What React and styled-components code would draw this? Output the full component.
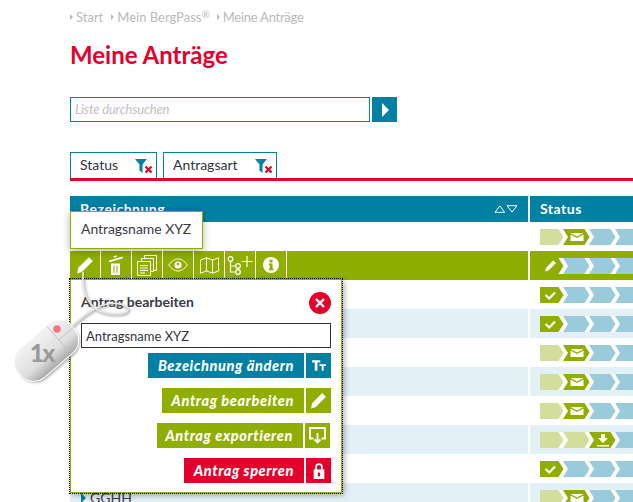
import React from "react";
import styled, { createGlobalStyle } from "styled-components";

const TEAL = "#0080a3";
const GREEN = "#8fae00";
const RED = "#e4002d";
const TINT = "#e3f0f5";
const BLUE = "#9acbda";
const LIGHT = "#d3de9d";

const Global = createGlobalStyle`
  html, body { margin: 0; padding: 0; background: #fff; }
  body { font-family: Lato, "Liberation Sans", sans-serif; color: #3a3a46; }
  * { box-sizing: border-box; }
`;

const Page = styled.div`
  position: relative;
  width: 633px;
  height: 502px;
  overflow: hidden;
  padding: 9px 0 0 70px;
`;
const Crumbs = styled.nav`
  display: flex;
  height: 16px;
  align-items: center;
  font-size: 13px;
  color: #bababa;
`;
const Crumb = styled.span`
  display: flex;
  align-items: center;
  margin-right: ${(p) => p.$gap || 0}px;
  letter-spacing: ${(p) => p.$track || 0}px;
  sup { font-size: 10px; line-height: 1; position: relative; top: -3px; }
  &::before {
    content: "";
    margin-right: 3px;
    border-left: 3px solid #bababa;
    border-top: 3px solid transparent;
    border-bottom: 3px solid transparent;
  }
`;
const Title = styled.h1`
  margin: 16px 0 0;
  height: 28px;
  line-height: 28px;
  font-size: 24px;
  font-weight: 700;
  color: ${RED};
`;
const Search = styled.div`
  display: flex;
  gap: 2px;
  margin-top: 28px;
  width: 327px;
`;
const SearchField = styled.div`
  width: 300px;
  height: 25px;
  border: 1px solid ${TEAL};
  padding-left: 4px;
  font-size: 13px;
  letter-spacing: -0.15px;
  line-height: 22px;
  font-style: italic;
  color: #c0c0c0;
`;
const SearchButton = styled.div`
  width: 25px;
  height: 25px;
  background: ${TEAL};
  display: flex;
  align-items: center;
  justify-content: center;
  &::before {
    content: "";
    margin-left: 1px;
    border-left: 7px solid #fff;
    border-top: 7px solid transparent;
    border-bottom: 7px solid transparent;
  }
`;
const Tabs = styled.div`
  display: flex;
  gap: 6px;
  margin-top: 30px;
  height: 29px;
  border-bottom: 3px solid ${RED};
`;
const Tab = styled.div`
  width: ${(p) => p.$w}px;
  height: 26px;
  border: 1px solid ${TEAL};
  border-bottom: none;
  padding-left: 9px;
  font-size: 14px;
  line-height: 24px;
  color: #33333f;
  position: relative;
`;
const FilterMark = styled.svg`
  position: absolute;
  right: 3px;
  top: 6px;
`;
const Table = styled.div`
  margin-top: 15px;
`;
const Row = styled.div`
  display: grid;
  grid-template-columns: 458px 103px;
  column-gap: 2px;
  height: ${(p) => (p.$head ? 26 : 29)}px;
`;
const HeadCell = styled.div`
  background: ${TEAL};
  color: #fff;
  font-weight: 700;
  font-size: 14px;
  letter-spacing: 0.5px;
  padding: 0 10px 2px;
  display: flex;
  align-items: center;
  justify-content: space-between;
  svg { margin-top: 1px; }
`;
const Cell = styled.div`
  background: ${(p) => (p.$sel ? GREEN : p.$tint ? TINT : "#fff")};
  display: flex;
  align-items: center;
`;
const NameCell = styled(Cell)`
  padding-left: 11px;
  font-size: 14px;
  color: #3a3a46;
  &::before {
    content: "";
    margin-right: 4px;
    border-left: 5px solid ${TEAL};
    border-top: 5px solid transparent;
    border-bottom: 5px solid transparent;
  }
`;
const Tool = styled.div`
  width: 31px;
  height: 28px;
  border-right: 1px solid #fff;
  display: flex;
  align-items: center;
  justify-content: center;
  align-self: flex-start;
`;
const StatusCell = styled(Cell)`
  padding-left: 10px;
  overflow: hidden;
`;
const Tip = styled.div`
  position: absolute;
  left: 70px;
  top: 211px;
  width: 133px;
  height: 38px;
  background: #fff;
  border: 1px solid ${GREEN};
  box-shadow: 0 2px 8px rgba(0, 0, 0, 0.3);
  padding-left: 10px;
  font-size: 14px;
  letter-spacing: -0.05px;
  line-height: 34px;
  color: #3a3a46;
`;
const Popup = styled.div`
  position: absolute;
  left: 70px;
  top: 279px;
  width: 272px;
  height: 214px;
  background: #fff;
  border: 1px solid ${GREEN};
  outline: 1px dotted #000;
  outline-offset: 0;
  box-shadow: 2px 2px 6px rgba(0, 0, 0, 0.35);
  padding: 12px 10px 0;
`;
const PopHead = styled.div`
  display: flex;
  align-items: center;
  justify-content: space-between;
  height: 22px;
  font-size: 14px;
  line-height: 18px;
  font-weight: 700;
  color: #3a3a46;
`;
const PopTitle = styled.span`
  margin-top: -3px;
`;
const Close = styled.div`
  width: 22px;
  height: 22px;
  border-radius: 50%;
  background: ${RED};
  display: flex;
  align-items: center;
  justify-content: center;
`;
const NameInput = styled.div`
  margin-top: 9px;
  height: 25px;
  width: 250px;
  border: 1px solid #333;
  padding-left: 4px;
  font-size: 13px;
  line-height: 24px;
  color: #33333f;
`;
const Actions = styled.div`
  margin-top: 5px;
  width: 250px;
  display: flex;
  flex-direction: column;
  align-items: flex-end;
  gap: 10px;
`;
const Action = styled.div`
  display: flex;
  gap: 2px;
  height: 25px;
  margin-right: ${(p) => p.$inset || 0}px;
`;
const ActionLabel = styled.div`
  background: ${(p) => p.$c};
  width: ${(p) => p.$w}px;
  color: #fff;
  font-weight: 900;
  font-style: italic;
  font-size: 14.5px;
  letter-spacing: 0.6px;
  text-align: right;
  padding-right: 10px;
  line-height: 25px;
  white-space: nowrap;
`;
const ActionIcon = styled.div`
  background: ${(p) => p.$c};
  width: 25px;
  display: flex;
  align-items: center;
  justify-content: center;
`;
const MouseArt = styled.svg`
  position: absolute;
  left: 0;
  top: 260px;
`;

const Pencil = ({ s = 16, c = "#fff" }) => (
  <svg width={s} height={s} viewBox="0 0 16 16">
    <path d="M11.500 1 15 4.500 5.500 14 1 15.500 2 10.500Z" fill={c} />
  </svg>
);
const Trash = () => (
  <svg width="17" height="20" viewBox="0 0 17 20">
    <path d="M1 5.500 14.500 1.500l.5 1.800L1.500 7.300Z M6 2.800l3-.9-.5-1.600-3 .9Z" fill="#fff" />
    <path d="M3 8.500h9V20H3Z" fill="#fff" />
    <path d="M6 10.500v7.500M9 10.500v7.500" stroke={GREEN} strokeWidth="1" />
  </svg>
);
const Copy = () => (
  <svg width="20" height="21" viewBox="0 0 20 21" fill="none" stroke="#fff" strokeWidth="1">
    <path d="M7.500 3.500V.5h12v15h-3" />
    <path d="M4.500 6.500V3.500h12v13h-3" />
    <path d="M.5 6.500h13v14H.5Z" />
    <path d="M3 10.500h8M3 13h8M3 15.500h8M3 18h5" />
  </svg>
);
const Eye = () => (
  <svg width="20" height="14" viewBox="0 0 20 14" fill="none" stroke="#fff">
    <path d="M.7 7C4 2.500 7 1 10 1s6 1.500 9.300 6c-3.300 4.500-6.300 6-9.300 6S4 11.500.7 7Z" strokeWidth="1" />
    <circle cx="10" cy="7" r="3.600" fill="#fff" stroke="none" />
    <circle cx="10" cy="6" r="1.300" fill={GREEN} stroke="none" />
  </svg>
);
const MapIcon = () => (
  <svg width="19" height="17" viewBox="0 0 19 17" fill="none" stroke="#fff" strokeWidth="1">
    <path d="M.5 3 6.500.8l6 2.200 6-2.200V14l-6 2.200-6-2.200-6 2.200Z M6.500 .8V14M12.500 3v13.200" />
  </svg>
);
const Tree = () => (
  <svg width="26" height="20" viewBox="0 0 26 20" fill="none" stroke="#fff" strokeWidth="1.200">
    <circle cx="3.500" cy="4" r="2.300" />
    <circle cx="11" cy="11" r="2.300" />
    <circle cx="11" cy="17" r="2.300" />
    <path d="M3.500 6.500V17h5M3.500 11h5" />
    <path d="M20 1v11M14.500 6.500h11" />
  </svg>
);
const Info = () => (
  <svg width="16" height="16" viewBox="0 0 16 16">
    <circle cx="8" cy="8" r="8" fill="#fff" />
    <path d="M6.500 2.800h3v2.600h-3ZM5.800 6.500h3.700v5h1v1.700H5.800v-1.700h1v-3.300h-1Z" fill={GREEN} />
  </svg>
);
const TextSize = () => (
  <svg width="14" height="11" viewBox="0 0 17 13" fill="#fff">
    <path d="M0 0h10v3H6.600v10H3.400V3H0ZM9 5h8v2h-2.800v6h-2.400V7H9Z" />
  </svg>
);
const ExportIcon = () => (
  <svg width="17" height="17" viewBox="0 0 17 17" fill="none" stroke="#fff" strokeWidth="2">
    <path d="M4.500 11.500H1V1h15v10.500h-3.500" />
    <path d="M8.500 6v9.500M5.500 12.500l3 3 3-3" strokeWidth="1.800" />
  </svg>
);
const Lock = () => (
  <svg width="12" height="16" viewBox="0 0 11 15">
    <path d="M.5 6h10v9H.5Z" fill="#fff" />
    <path d="M2.800 6.500V3.700a2.700 2.700 0 0 1 5.400 0v2.800" fill="none" stroke="#fff" strokeWidth="1.600" />
    <path d="M4.500 9h2v3.500h-2Z" fill={RED} />
  </svg>
);
const Funnel = () => (
  <FilterMark width="18" height="15" viewBox="0 0 18 15">
    <path d="M0 0h12L7.500 5.500V14L4.500 11.500V5.500Z" fill={TEAL} />
    <path d="M10.500 7.500l6 6M16.500 7.500l-6 6" stroke={RED} strokeWidth="2.200" />
  </FilterMark>
);
const Sort = () => (
  <svg width="24" height="8" viewBox="0 0 24 8" fill="none" stroke="#fff" strokeWidth="1">
    <path d="M1 7.300 5.800.9l4.800 6.400Z" />
    <path d="M13 .7h10L18 7Z" />
  </svg>
);

const seg = (L, first) =>
  first
    ? `0,0 18.500,0 23.500,8 18.500,16 0,16`
    : `${L},0 ${L + 21.5},0 ${L + 26.5},8 ${L + 21.5},16 ${L},16 ${L + 5},8`;

const colours = { l: LIGHT, g: GREEN, b: BLUE };
const marks = {
  mail: (x) => (
    <g transform={`translate(${x - 6.500},4)`}>
      <path d="M0 0h13L6.500 3.500Z" fill="#fff" />
      <path d="M0 1.400 6.500 5 13 1.400V8H0Z" fill="#fff" />
    </g>
  ),
  check: (x) => (
    <path transform={`translate(${x - 5},4)`} d="M0 4 3.800 7.500 9.500 1.500" fill="none" stroke="#fff" strokeWidth="2.200" />
  ),
  dl: (x) => (
    <g transform={`translate(${x - 6},2)`} fill="#fff">
      <path d="M4 0h4v4h3L6 9 1 4h3Z" />
      <path d="M0 11h12v1.500H0Z" />
    </g>
  ),
  pen: (x) => (
    <path transform={`translate(${x - 5.500},2.500)`} d="M8 0l3 2.600L3.500 10 0 11l1-3.500Z" fill="#fff" />
  ),
};

const StatusBar = ({ parts }) => (
  <svg width="93" height="16" viewBox="0 0 93 16">
    <rect width="93" height="16" fill="#fff" />
    {parts.map(([c, m], i) => {
      const L = -3 + 26 * i;
      const cx = i === 0 ? 10.500 : L + 14;
      return (
        <g key={i}>
          <polygon points={seg(L, i === 0)} fill={colours[c]} />
          {m && marks[m](cx)}
        </g>
      );
    })}
  </svg>
);

const MAIL = [["l"], ["g", "mail"], ["b"], ["b"]];
const CHECK = [["g", "check"], ["b"], ["b"], ["b"]];
const rows = [
  { parts: MAIL },
  { parts: [["g", "pen"], ["b"], ["b"], ["b"]], sel: true },
  { parts: CHECK },
  { parts: CHECK, tint: true },
  { parts: MAIL },
  { parts: MAIL, tint: true },
  { parts: MAIL },
  { parts: [["l"], ["l"], ["g", "dl"], ["b"]], tint: true },
  { parts: CHECK },
  { parts: MAIL, tint: true, name: "GGHH" },
];

const CABLE = "M83 272C82 290 86 303 98 310C108 315 125 315 128 310C130 305 114 300 100 306C88 311 78 320 68 330";

const MouseGraphic = () => (
  <MouseArt width="140" height="130" viewBox="0 260 140 130">
    <defs>
      <linearGradient id="mb" x1="0" y1="0" x2="0" y2="1">
        <stop offset="0" stopColor="#f4f4f4" />
        <stop offset="0.65" stopColor="#dedede" />
        <stop offset="1" stopColor="#a8a8a8" />
      </linearGradient>
      <filter id="sh" x="-20%" y="-20%" width="140%" height="140%">
        <feGaussianBlur stdDeviation="1" />
      </filter>
    </defs>
    <path d={CABLE} fill="none" stroke="#777" strokeOpacity="0.55" strokeWidth="2.500" filter="url(#sh)" transform="translate(1,1.500)" />
    <path d={CABLE} fill="none" stroke="#e6e6e6" strokeWidth="1.600" />
    <g transform="rotate(-41 46 351)">
      <rect x="11" y="333" width="71" height="38" rx="18" fill="#777" opacity="0.55" filter="url(#sh)" transform="translate(0,1.500)" />
      <rect x="11" y="332" width="71" height="38" rx="17" fill="url(#mb)" stroke="#fff" strokeWidth="1" />
      <path d="M63 333v36M63 351h19" stroke="#bcbcbc" strokeWidth="0.800" fill="none" />
    </g>
    <circle cx="57" cy="329" r="3.800" fill="#f8747f" />
    <text x="30" y="362" fontFamily="Lato, sans-serif" fontWeight="900" fontSize="24" letterSpacing="-1.500" fill="#999">1x</text>
  </MouseArt>
);

const actions = [
  { label: "Bezeichnung ändern", c: TEAL, w: 156, icon: <TextSize /> },
  { label: "Antrag bearbeiten", c: GREEN, w: 142, icon: <Pencil s={17} /> },
  { label: "Antrag exportieren", c: GREEN, w: 146, icon: <ExportIcon />, inset: 1 },
  { label: "Antrag sperren", c: RED, w: 120, icon: <Lock /> },
];

export default function App() {
  return (
    <Page>
      <Global />
      <Crumbs>
        <Crumb $gap={8}>Start</Crumb>
        <Crumb $gap={7}>
          Mein BergPass<sup>®</sup>
        </Crumb>
        <Crumb $track={-0.25}>Meine Anträge</Crumb>
      </Crumbs>
      <Title>Meine Anträge</Title>
      <Search>
        <SearchField>Liste durchsuchen</SearchField>
        <SearchButton />
      </Search>
      <Tabs>
        <Tab $w={87}>
          Status
          <Funnel />
        </Tab>
        <Tab $w={114}>
          Antragsart
          <Funnel />
        </Tab>
      </Tabs>
      <Table>
        <Row $head>
          <HeadCell>
            Bezeichnung
            <Sort />
          </HeadCell>
          <HeadCell>Status</HeadCell>
        </Row>
        {rows.map((r, i) => (
          <Row key={i}>
            {r.sel ? (
              <Cell $sel>
                <Tool><Pencil s={18} /></Tool>
                <Tool><Trash /></Tool>
                <Tool><Copy /></Tool>
                <Tool><Eye /></Tool>
                <Tool><MapIcon /></Tool>
                <Tool><Tree /></Tool>
                <Tool><Info /></Tool>
              </Cell>
            ) : r.name ? (
              <NameCell $tint={r.tint}>{r.name}</NameCell>
            ) : (
              <Cell $tint={r.tint} />
            )}
            <StatusCell $sel={r.sel} $tint={r.tint}>
              <StatusBar parts={r.parts} />
            </StatusCell>
          </Row>
        ))}
      </Table>
      <Tip>Antragsname XYZ</Tip>
      <Popup>
        <PopHead>
          <PopTitle>Antrag bearbeiten</PopTitle>
          <Close>
            <svg width="10" height="10" viewBox="0 0 10 10">
              <path d="M1 1l8 8M9 1l-8 8" stroke="#fff" strokeWidth="2.400" />
            </svg>
          </Close>
        </PopHead>
        <NameInput>Antragsname XYZ</NameInput>
        <Actions>
          {actions.map((a) => (
            <Action key={a.label} $inset={a.inset}>
              <ActionLabel $c={a.c} $w={a.w}>{a.label}</ActionLabel>
              <ActionIcon $c={a.c}>{a.icon}</ActionIcon>
            </Action>
          ))}
        </Actions>
      </Popup>
      <MouseGraphic />
    </Page>
  );
}
